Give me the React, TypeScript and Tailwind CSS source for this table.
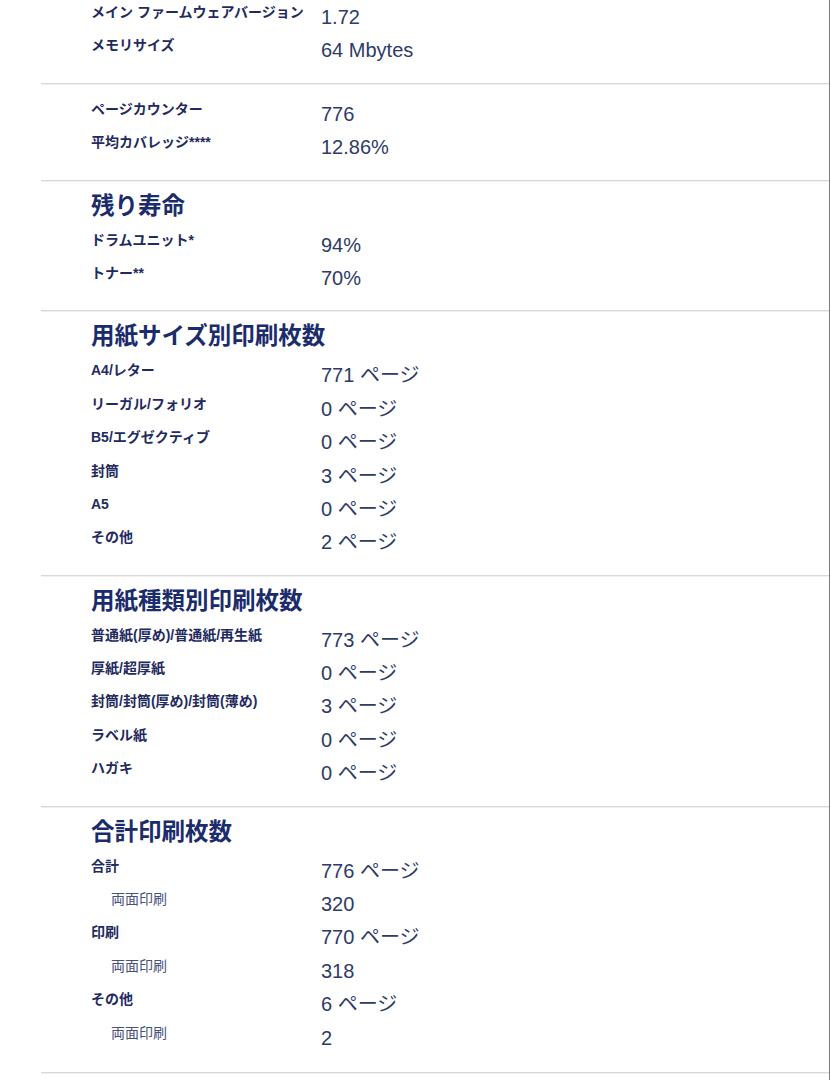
type Row = {
  label: string;
  value: string;
  sub?: boolean;
};

type Section = {
  title?: string;
  rows: Row[];
};

const sections: Section[] = [
  {
    rows: [
      { label: "メイン ファームウェアバージョン", value: "1.72" },
      { label: "メモリサイズ", value: "64 Mbytes" },
    ],
  },
  {
    rows: [
      { label: "ページカウンター", value: "776" },
      { label: "平均カバレッジ****", value: "12.86%" },
    ],
  },
  {
    title: "残り寿命",
    rows: [
      { label: "ドラムユニット*", value: "94%" },
      { label: "トナー**", value: "70%" },
    ],
  },
  {
    title: "用紙サイズ別印刷枚数",
    rows: [
      { label: "A4/レター", value: "771 ページ" },
      { label: "リーガル/フォリオ", value: "0 ページ" },
      { label: "B5/エグゼクティブ", value: "0 ページ" },
      { label: "封筒", value: "3 ページ" },
      { label: "A5", value: "0 ページ" },
      { label: "その他", value: "2 ページ" },
    ],
  },
  {
    title: "用紙種類別印刷枚数",
    rows: [
      { label: "普通紙(厚め)/普通紙/再生紙", value: "773 ページ" },
      { label: "厚紙/超厚紙", value: "0 ページ" },
      { label: "封筒/封筒(厚め)/封筒(薄め)", value: "3 ページ" },
      { label: "ラベル紙", value: "0 ページ" },
      { label: "ハガキ", value: "0 ページ" },
    ],
  },
  {
    title: "合計印刷枚数",
    rows: [
      { label: "合計", value: "776 ページ" },
      { label: "両面印刷", value: "320", sub: true },
      { label: "印刷", value: "770 ページ" },
      { label: "両面印刷", value: "318", sub: true },
      { label: "その他", value: "6 ページ" },
      { label: "両面印刷", value: "2", sub: true },
    ],
  },
];

const InfoRow = ({ row }: { row: Row }) => (
  <div className="flex h-[33.4px]">
    <div
      className={`w-[230px] shrink-0 pt-[1px] text-[14px] leading-[20px] ${
        row.sub ? "pl-[20px] font-normal text-[#46527c]" : "font-bold text-[#1f2b5e]"
      }`}
    >
      {row.label}
    </div>
    <div className="pt-[2px] text-[20px] leading-[28px] text-[#2e3b68]">
      {row.value}
    </div>
  </div>
);

export default function App() {
  return (
    <div
      className="min-h-screen w-full border-r border-[#7c7c7c] bg-white"
      style={{ fontFamily: '"Liberation Sans", "Noto Sans CJK JP", sans-serif' }}
    >
      {sections.map((section, idx) => (
        <div
          key={idx}
          className={`ml-[41px] border-b border-[#d9d9d9] pb-[15px] pl-[50px] shadow-[0_1px_0_#f0f0f0] ${
            idx === 0 ? "pt-[1px]" : section.title ? "pt-[9px]" : "pt-[14px]"
          } ${idx === sections.length - 1 ? "pb-[17px]" : ""}`}
        >
          {section.title && (
            <h2 className="mb-[7px] text-[23.5px] font-bold leading-[32px] text-[#1b2c6c]">
              {section.title}
            </h2>
          )}
          {section.rows.map((row, i) => (
            <InfoRow key={i} row={row} />
          ))}
        </div>
      ))}
    </div>
  );
}
